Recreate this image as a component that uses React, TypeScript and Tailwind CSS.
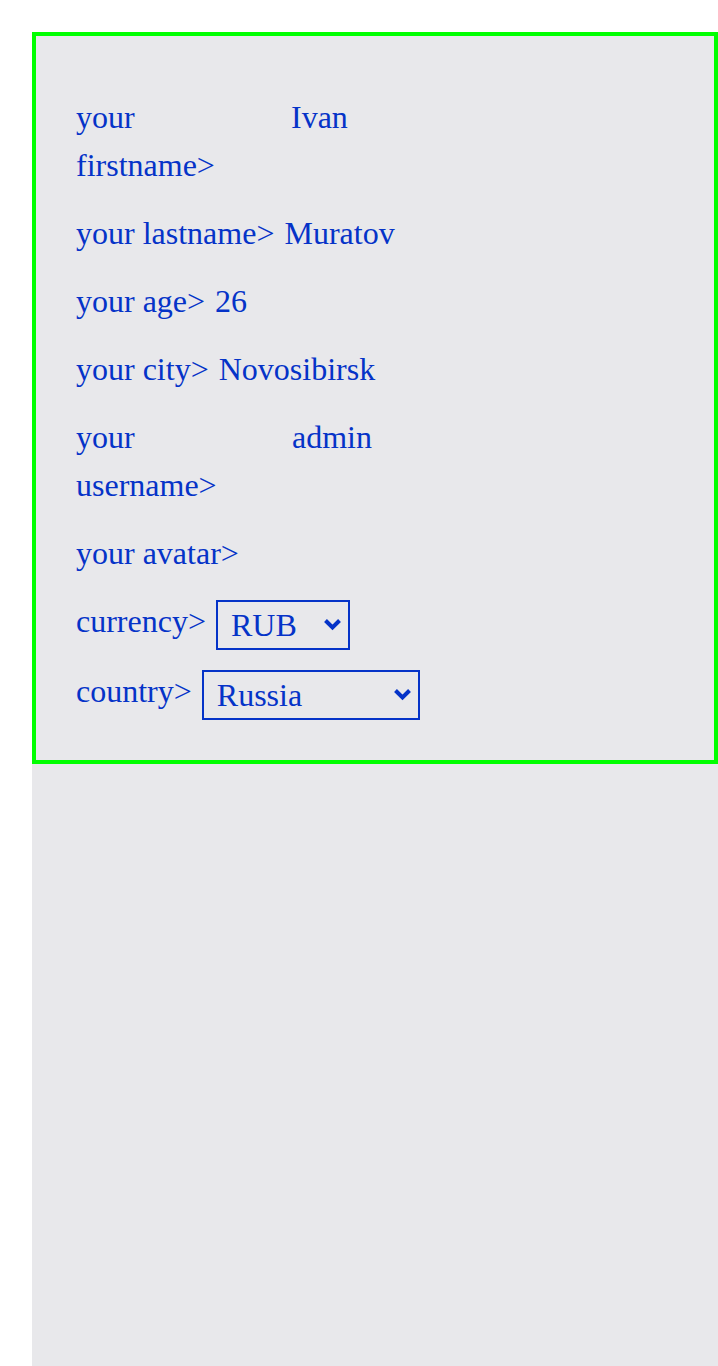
const serif = { fontFamily: '"Liberation Serif", "Times New Roman", serif' }

const Row = ({
  label,
  labelWidth,
  children,
  className = '',
}: {
  label: string
  labelWidth?: string
  children?: React.ReactNode
  className?: string
}) => (
  <div className={`flex items-start gap-[10px] ${className}`}>
    <span className={labelWidth ?? 'shrink-0'}>{label}</span>
    {children}
  </div>
)

const Select = ({ value, options, width }: { value: string; options: string[]; width: string }) => (
  <div className={`relative mt-[3px] h-[50px] ${width}`}>
    <select
      defaultValue={value}
      className="h-full w-full appearance-none border-2 border-[#0533c8] pl-[13px] text-[32px] leading-[36px] outline-none"
    >
      {options.map((o) => (
        <option key={o}>{o}</option>
      ))}
    </select>
    <svg
      className="pointer-events-none absolute right-[8px] top-[18px]"
      width="19"
      height="13"
      viewBox="0 0 19 13"
      aria-hidden
    >
      <polyline points="2.5,2.5 9.5,9.5 16.5,2.5" fill="none" stroke="#0533c8" strokeWidth="4" />
    </svg>
  </div>
)

export default function App() {
  return (
    <div className="min-h-screen bg-white pl-8 pt-8" style={serif}>
      <div className="min-h-[1334px] bg-[#e8e8eb]">
        <div className="border-4 border-[#00ff00] pl-[40px] pt-[57px] pb-[40px] text-[32px] leading-[48px] text-[#0533c8]">
          <Row label="your firstname>" labelWidth="w-[205px] shrink-0">
            <span>Ivan</span>
          </Row>
          <Row label="your lastname>" className="mt-[20px]">
            <span>Muratov</span>
          </Row>
          <Row label="your age>" className="mt-[20px]">
            <span>26</span>
          </Row>
          <Row label="your city>" className="mt-[20px]">
            <span>Novosibirsk</span>
          </Row>
          <Row label="your username>" labelWidth="w-[206px] shrink-0" className="mt-[20px]">
            <span>admin</span>
          </Row>
          <Row label="your avatar>" className="mt-[20px]" />
          <Row label="currency>" className="mt-[20px]">
            <Select value="RUB" options={['RUB', 'USD', 'EUR']} width="w-[134px]" />
          </Row>
          <Row label="country>" className="mt-[17px]">
            <Select value="Russia" options={['Russia', 'Kazakhstan', 'Belarus']} width="w-[218px]" />
          </Row>
        </div>
      </div>
    </div>
  )
}
